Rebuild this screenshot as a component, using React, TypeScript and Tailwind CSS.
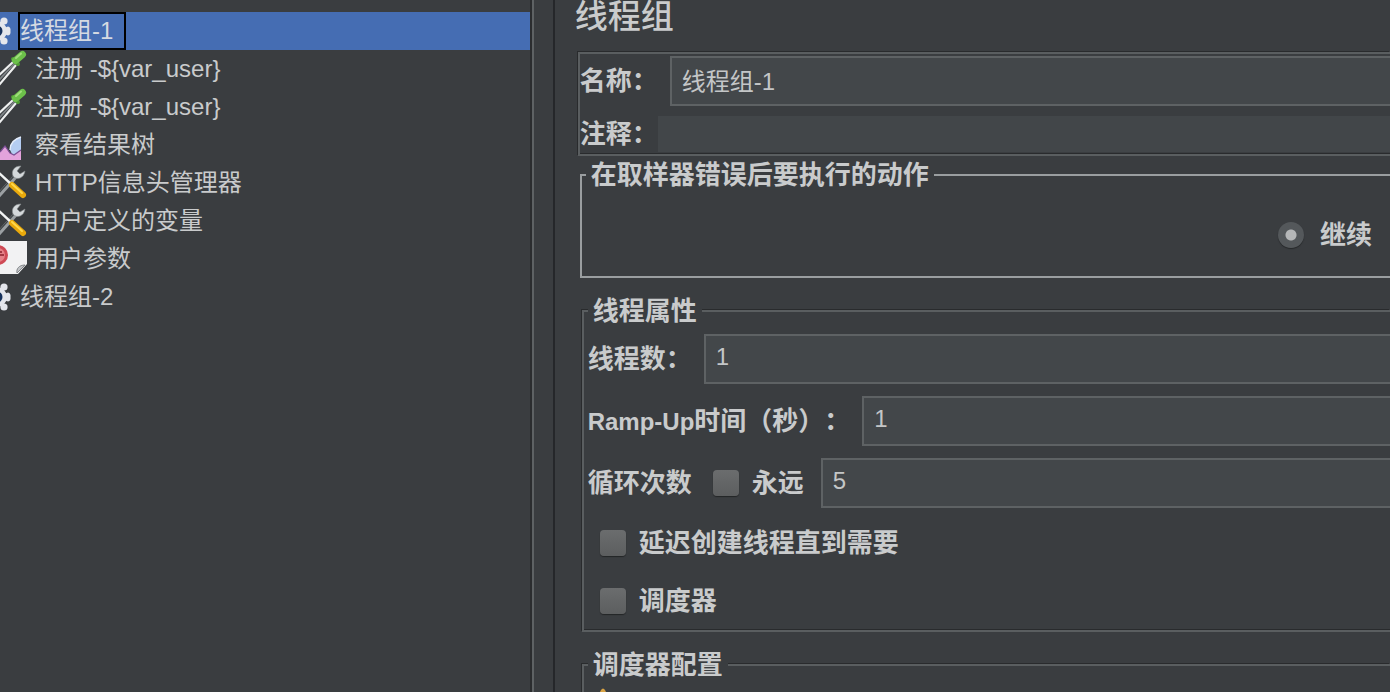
import type { ReactNode } from 'react';

type IconName = 'gear' | 'sampler' | 'chart' | 'tools' | 'params';

interface TreeNode {
  label: string;
  icon: IconName;
  level: 0 | 1;
}

const treeNodes: TreeNode[] = [
  { label: '线程组-1', icon: 'gear', level: 0 },
  { label: '注册 -${var_user}', icon: 'sampler', level: 1 },
  { label: '注册 -${var_user}', icon: 'sampler', level: 1 },
  { label: '察看结果树', icon: 'chart', level: 1 },
  { label: 'HTTP信息头管理器', icon: 'tools', level: 1 },
  { label: '用户定义的变量', icon: 'tools', level: 1 },
  { label: '用户参数', icon: 'params', level: 1 },
  { label: '线程组-2', icon: 'gear', level: 0 },
];

const inputClasses =
  'flex-1 min-w-0 h-[50px] border-2 border-r-0 border-[#5e6264] bg-[#43474a] px-[10px] pb-1 text-2xl font-normal text-[#c4c6c7] outline-none';

const etched = 'border-[#5a5e60] shadow-[-1px_-1px_0_#292b2d,inset_0_-1px_0_#292b2d]';

function GearIcon() {
  return (
    <svg viewBox="0 0 12 38" className="w-3 h-[38px] shrink-0">
      <g fill="#e4e6ec">
        <circle cx="-3" cy="19" r="10" />
        <circle cx="4" cy="9" r="3.6" />
        <path d="M4 16 L8 14.5 Q11 15 10.5 19 Q11 23 8 23.5 L4 22 Z" />
        <circle cx="4" cy="29" r="3.6" />
      </g>
      <circle cx="-3" cy="19" r="5.5" fill="#16315c" />
    </svg>
  );
}

function SamplerIcon() {
  return (
    <svg viewBox="0 0 28 38" className="w-7 h-[38px] shrink-0">
      <path d="M-2 26 L13 12 M-1 35 L16 15" stroke="#eef0f0" strokeWidth="2.2" />
      <path d="M-2 31 L15 13" stroke="#7d8386" strokeWidth="1.8" />
      <path d="M13 9 L18 14" stroke="#4f9a35" strokeWidth="4" strokeLinecap="round" />
      <path d="M15.5 10.5 L22.5 4.5" stroke="#6cc04a" strokeWidth="7" strokeLinecap="round" />
      <path d="M16 8 L21 3.5" stroke="#a0de7c" strokeWidth="2" strokeLinecap="round" />
    </svg>
  );
}

function ChartIcon() {
  return (
    <svg viewBox="0 0 28 38" className="w-7 h-[38px] shrink-0">
      <path d="M21 34 V11 C14 13 10 18 10 24 L15 34 Z" fill="#b4cdf2" />
      <path d="M21 11 C14 13 10 18 10 24" stroke="#e4edfb" strokeWidth="1.5" fill="none" />
      <path d="M0 34 V26 L5 20 L10 27 L14 29 L21 24 V34 Z" fill="#e3a3dc" />
      <path d="M0 26 L5 20 L10 27 L14 29 L21 24" stroke="#7a4f94" strokeWidth="1.2" fill="none" />
    </svg>
  );
}

function ToolsIcon() {
  return (
    <svg viewBox="0 0 28 38" className="w-7 h-[38px] shrink-0">
      <path d="M-2 32 L16 12" stroke="#9ba0a3" strokeWidth="4.5" />
      <path d="M-2 30 L15 11" stroke="#3f4447" strokeWidth="1.2" />
      <path
        d="M21 2 C14 2 11 7 13 12 C17 17 24 14 25 7 L20 10 L17 7 Z"
        fill="#d5d9db"
        stroke="#85898c"
        strokeWidth="0.6"
      />
      <path d="M-1 9 L12 21" stroke="#f2f4f4" strokeWidth="2.4" />
      <path d="M12 21 L23 31" stroke="#e9a90c" strokeWidth="6" strokeLinecap="round" />
      <path d="M12 20 L22 29" stroke="#ffd84a" strokeWidth="2" strokeLinecap="round" />
    </svg>
  );
}

function ParamsIcon() {
  return (
    <svg viewBox="0 0 28 38" className="w-7 h-[38px] shrink-0">
      <path d="M0 1 H27 V24 L18 34 H0 Z" fill="#f2f2f3" />
      <path d="M25 25 L17 33 C16 29 19 25 25 25 Z" fill="#c3c5c8" stroke="#6c7073" strokeWidth="0.8" />
      <circle cx="-2" cy="15" r="10" fill="#cf4a55" />
      <circle cx="-2" cy="15" r="7" fill="#e58087" />
      <path d="M0 15 H4 M0 12 L2 12" stroke="#8a1f2b" strokeWidth="1.6" />
    </svg>
  );
}

const icons: Record<IconName, () => ReactNode> = {
  gear: GearIcon,
  sampler: SamplerIcon,
  chart: ChartIcon,
  tools: ToolsIcon,
  params: ParamsIcon,
};

function TreeRow({ node, selected }: { node: TreeNode; selected: boolean }) {
  const Icon = icons[node.icon];
  const border = selected ? 'border-black text-[#d5dae2]' : 'border-transparent';

  return (
    <li
      role="treeitem"
      aria-selected={selected}
      className={`flex items-center h-[38px] text-2xl whitespace-nowrap ${
        node.level === 0 ? 'gap-[6px]' : 'gap-[5px]'
      } ${selected ? 'bg-[#456db3]' : ''}`}
    >
      <Icon />
      <span className={`flex items-center h-[38px] border-2 whitespace-pre ${node.level === 0 ? 'pr-[11px]' : ''} ${border}`}>
        {node.label}
      </span>
    </li>
  );
}

function Legend({ children }: { children: ReactNode }) {
  return <legend className="h-[38px] px-[5px] leading-[38px] bg-[#3a3d40]">{children}</legend>;
}

function CheckBox({ label }: { label: string }) {
  return (
    <label className="flex items-center gap-[13px]">
      <input
        type="checkbox"
        className="appearance-none size-[26px] rounded-sm bg-linear-to-b from-[#6b6d6e] to-[#5c5e5f] shadow-[0_1px_1px_#232526] checked:bg-[#456db3]"
      />
      {label}
    </label>
  );
}

export default function App() {
  return (
    <div className="flex h-screen overflow-hidden bg-[#3a3d40] text-[#c9cbcc] font-['Liberation_Sans','Noto_Sans_CJK_SC',sans-serif] [text-spacing-trim:space-all]">
      <aside className="w-[38.25%] shrink-0 border-r-2 border-[#2b2d2f] pt-3">
        <ul role="tree" aria-label="测试计划">
          {treeNodes.map((node, index) => (
            <TreeRow key={index} node={node} selected={index === 0} />
          ))}
        </ul>
      </aside>

      <div role="separator" className="w-[23px] shrink-0 border-l-2 border-r-2 border-l-[#5e6264] border-r-[#25272a]" />

      <main className="flex-1 min-w-0 pl-5 text-[26px] font-bold">
        <h1 className="mb-[18px] text-[33px] leading-[34px] font-medium">线程组</h1>

        <div className="pl-[3px]">
          <div className={`flex flex-col gap-[10px] border-2 border-r-0 py-[2px] ${etched}`}>
            <div className="flex items-center gap-3">
              <label htmlFor="name">名称：</label>
              <input id="name" defaultValue="线程组-1" className={inputClasses} />
            </div>
            <div className="flex items-center h-9">
              <label htmlFor="comment">注释：</label>
              <input
                id="comment"
                className="flex-1 min-w-0 h-9 bg-[#424649] px-[10px] text-2xl font-normal outline-none"
              />
            </div>
          </div>

          <fieldset className="ml-[2px] border-2 border-r-0 border-[#9a9ea0] pl-1">
            <Legend>在取样器错误后要执行的动作</Legend>
            <div className="flex items-center justify-end h-[82px] pr-[18px]">
              <label className="flex items-center gap-4">
                <input
                  type="radio"
                  name="on-error"
                  defaultChecked
                  className="appearance-none size-[26px] rounded-full bg-[#54585b] shadow-[0_1px_1px_#26282a] checked:bg-[radial-gradient(circle,#b5b7b8_5px,#54585b_6px)]"
                />
                继续
              </label>
            </div>
          </fieldset>

          <fieldset className={`mt-[14px] ml-1 border-2 border-r-0 pl-1 ${etched}`}>
            <Legend>线程属性</Legend>
            <div className="flex flex-col gap-3 pt-1 pb-[6px]">
              <div className="flex items-center gap-3">
                <label htmlFor="threads">线程数：</label>
                <input id="threads" defaultValue="1" className={inputClasses} />
              </div>
              <div className="flex items-center gap-3">
                <label htmlFor="ramp-up">
                  <span className="text-2xl">Ramp-Up</span>时间（秒）：
                </label>
                <input id="ramp-up" defaultValue="1" className={inputClasses} />
              </div>
              <div className="flex items-center gap-[17px]">
                <label htmlFor="loops" className="mr-1">
                  循环次数
                </label>
                <CheckBox label="永远" />
                <input id="loops" defaultValue="5" className={inputClasses} />
              </div>
              <div className="flex items-center h-[46px] pl-3">
                <CheckBox label="延迟创建线程直到需要" />
              </div>
              <div className="flex items-center h-[46px] pl-3">
                <CheckBox label="调度器" />
              </div>
            </div>
          </fieldset>

          <fieldset className={`mt-[14px] ml-1 border-2 border-r-0 pl-1 ${etched}`}>
            <Legend>调度器配置</Legend>
            <svg viewBox="0 0 30 32" className="w-[30px] h-8">
              <path d="M13 6 Q15 3 17 6 L29 30 H1 Z" fill="#d9a343" />
            </svg>
          </fieldset>
        </div>
      </main>
    </div>
  );
}
